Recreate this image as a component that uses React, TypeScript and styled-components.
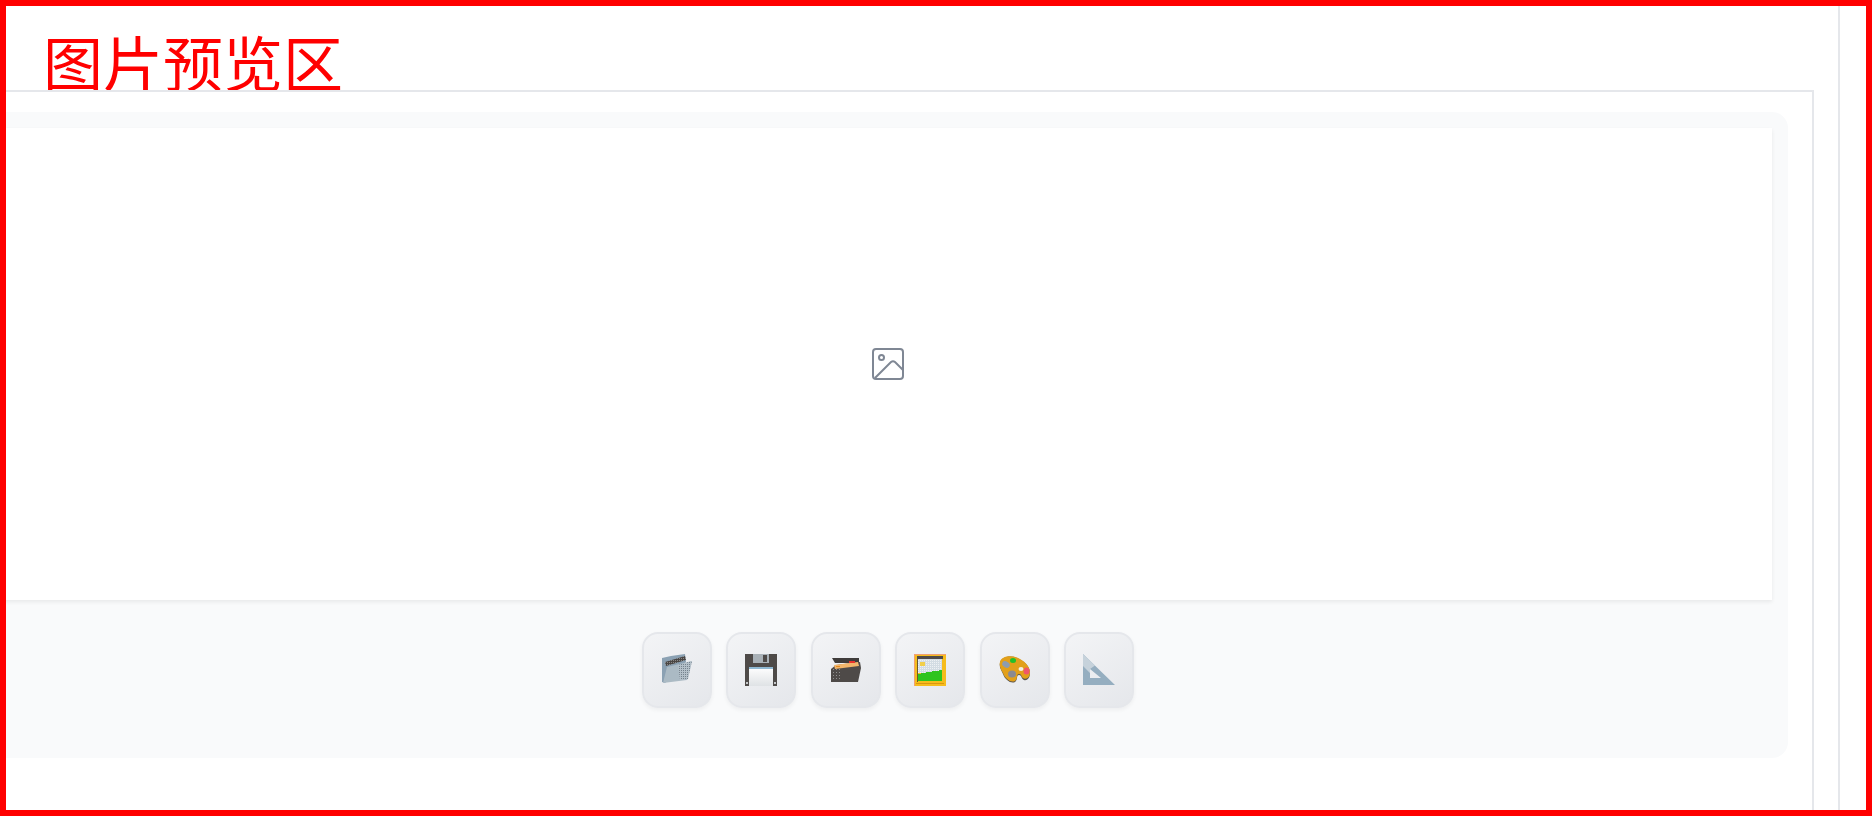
import React from "react";
import styled, { createGlobalStyle } from "styled-components";

const GlobalStyle = createGlobalStyle`
  html, body {
    margin: 0;
    padding: 0;
    background: #fff;
  }
`;

const Frame = styled.div`
  box-sizing: border-box;
  width: 1872px;
  height: 816px;
  border: 6px solid #ff0000;
  display: flex;
  overflow: hidden;
  background: #fff;
`;

const Workspace = styled.main`
  width: 1832px;
  flex-shrink: 0;
  display: flex;
  flex-direction: column;
  min-width: 0;
`;

const SideRail = styled.aside`
  flex: 1;
  border-left: 2px solid #e5e7eb;
`;

const TitleBar = styled.div`
  height: 84px;
  flex-shrink: 0;
  padding-left: 37px;
  overflow: hidden;
`;

const Title = styled.h1`
  margin: 0;
  font-family: "Noto Sans CJK SC", sans-serif;
  font-weight: 400;
  font-size: 60px;
  line-height: 110px;
  color: #ff0000;
  white-space: nowrap;
`;

const PreviewFrame = styled.section`
  flex: 1;
  margin-right: 24px;
  padding: 20px 24px 0 0;
  border-top: 2px solid #e5e7eb;
  border-right: 2px solid #e5e7eb;
`;

const Panel = styled.div`
  margin-left: -18px;
  height: 646px;
  box-sizing: border-box;
  padding: 16px 16px 0;
  background: #f9fafb;
  border-radius: 16px;
  display: flex;
  flex-direction: column;
`;

const Canvas = styled.div`
  height: 472px;
  flex-shrink: 0;
  background: #fff;
  box-shadow: 0 2px 4px rgba(0, 0, 0, 0.07);
  display: flex;
  align-items: center;
  justify-content: center;
`;

const Toolbar = styled.div`
  display: flex;
  justify-content: center;
  gap: 14.5px;
  padding-top: 32px;
`;

const ToolButton = styled.button`
  box-sizing: border-box;
  width: 70px;
  height: 76px;
  padding: 0;
  border: 2px solid #e5e7eb;
  border-radius: 16px;
  background: linear-gradient(145deg, #f3f4f6, #e5e7eb);
  box-shadow: 0 2px 4px rgba(0, 0, 0, 0.05);
  display: flex;
  align-items: center;
  justify-content: center;
`;

const Placeholder = () => (
  <svg width="32" height="32" viewBox="0 0 32 32" fill="none" stroke="#7f8794" strokeWidth="2">
    <rect x="1" y="1" width="30" height="30" rx="3" />
    <circle cx="9.5" cy="9.5" r="2.5" />
    <path d="M3 30 L19 14 Q21 12.5 23 14 L31 22" />
  </svg>
);

const OpenIcon = () => (
  <svg width="32" height="32" viewBox="0 0 32 32">
    <defs>
      <pattern id="folderDots" width="2" height="2" patternUnits="userSpaceOnUse">
        <rect width="2" height="2" fill="#b4c0c9" />
        <rect width="1" height="1" fill="#75828d" />
      </pattern>
      <pattern id="folderBand" width="2" height="2" patternUnits="userSpaceOnUse">
        <rect width="2" height="2" fill="#4a4644" />
        <rect width="1" height="1" fill="#8a8785" />
      </pattern>
    </defs>
    <path d="M1 4 L10 2 L24 0 L25 8 L4 29 L1 28 Z" fill="#8ba1b3" />
    <path d="M4 8 L24 2 L25 6 L5 12 Z" fill="url(#folderBand)" />
    <path d="M6 13 L31 7 L26 26 L2 29 Z" fill="#abbac4" />
    <path d="M17 11 L31 7 L27 25 L19 26 Z" fill="url(#folderDots)" />
  </svg>
);

const SaveIcon = () => (
  <svg width="32" height="32" viewBox="0 0 32 32" shapeRendering="crispEdges">
    <defs>
      <linearGradient id="saveLabel" x1="0" y1="0" x2="0" y2="1">
        <stop offset="0" stopColor="#ffffff" />
        <stop offset="1" stopColor="#dfe2e5" />
      </linearGradient>
    </defs>
    <rect x="0" y="0" width="32" height="32" fill="#4e4a48" />
    <rect x="8" y="0" width="16" height="9" fill="#a9b1b7" />
    <rect x="18" y="1" width="4" height="7" fill="#4e4a48" />
    <rect x="4" y="13" width="24" height="19" fill="url(#saveLabel)" />
    <rect x="4" y="13" width="24" height="2" fill="#8fb8d2" />
    <rect x="1" y="28" width="2" height="2" fill="#c5c8ca" />
    <rect x="29" y="28" width="2" height="2" fill="#c5c8ca" />
  </svg>
);

const ScanIcon = () => (
  <svg width="32" height="32" viewBox="0 0 32 32">
    <defs>
      <pattern id="scanDots" width="3" height="3" patternUnits="userSpaceOnUse">
        <rect width="3" height="3" fill="#4e4a48" />
        <rect width="1" height="1" fill="#8f8f8f" />
      </pattern>
    </defs>
    <path d="M2 4 L29 4 L29 9 L5 9 Z" fill="#3f3c3b" />
    <path d="M1 15 L6 11 L30 8 L31 14 L28 28 L1 28 Z" fill="#4e4a48" />
    <rect x="1" y="15" width="10" height="12" fill="url(#scanDots)" />
    <path d="M4 11 L28 8 L29 12 L5 15 Z" fill="#f2b56b" />
    <rect x="19" y="7" width="6" height="2" fill="#e8322c" />
    <rect x="6" y="12" width="4" height="1" fill="#e58a1f" />
  </svg>
);

const PictureIcon = () => (
  <svg width="32" height="32" viewBox="0 0 32 32" shapeRendering="crispEdges">
    <defs>
      <pattern id="skyDots" width="2" height="2" patternUnits="userSpaceOnUse">
        <rect width="2" height="2" fill="#d3dce3" />
        <rect width="1" height="1" fill="#eef1f4" />
      </pattern>
    </defs>
    <rect x="0" y="0" width="32" height="32" fill="#f6bc1c" />
    <rect x="0" y="0" width="32" height="1" fill="#f0a070" />
    <rect x="0" y="0" width="1" height="32" fill="#f0a070" />
    <rect x="3" y="2" width="26" height="3" fill="#4e4a48" />
    <rect x="4" y="5" width="24" height="14" fill="url(#skyDots)" />
    <rect x="6" y="8" width="5" height="4" fill="#f2cf4a" />
    <path d="M4 20 L14 18 L28 16 L28 27 L4 27 Z" fill="#2fc41e" />
    <rect x="3" y="5" width="1" height="23" fill="#6b5a2a" />
    <rect x="2" y="29" width="28" height="1" fill="#d9960f" />
  </svg>
);

const PaletteIcon = () => (
  <svg width="32" height="28" viewBox="0 0 32 28">
    <path d="M1 7 C2 1 11 -1 18 2 C25 5 31 10 31 17 C31 22 28 25 25 24 C22 23 23 19 20 19 C17 19 19 24 16 26 C12 28 6 24 4 18 C2 14 0 11 1 7 Z" fill="#5a554f" />
    <path d="M1 6 C2 0.5 11 -1 18 1.5 C25 4.5 31 10 31 16.5 C31 21 28 23.5 25 22.5 C22 21.5 23 18 20 18 C17 18 19 23 16 25 C12 27 6 23 4 17 C2 13.5 0 10 1 6 Z" fill="#e2a01a" />
    <ellipse cx="14" cy="4.5" rx="3" ry="2.5" fill="#22c02a" />
    <ellipse cx="7" cy="8.5" rx="4" ry="3" fill="#8c9cb0" transform="rotate(30 7 8.5)" />
    <ellipse cx="13" cy="18" rx="4" ry="3.5" fill="#8a8a92" />
    <ellipse cx="27.5" cy="15" rx="3" ry="3.5" fill="#f0566a" />
    <ellipse cx="22" cy="13" rx="2.5" ry="2" fill="#f4efe2" />
  </svg>
);

const SquareIcon = () => (
  <svg width="32" height="32" viewBox="0 0 32 32">
    <path fillRule="evenodd" d="M0 0 L32 31 L0 31 Z M7 15 L7 24 L18 24 Z" fill="#95aec0" />
    <path d="M0 0 L12 11.6 L7 15 L7 19 L0 12 Z" fill="#c6d2db" />
  </svg>
);

const tools = [
  { name: "open", icon: <OpenIcon /> },
  { name: "save", icon: <SaveIcon /> },
  { name: "scan", icon: <ScanIcon /> },
  { name: "picture", icon: <PictureIcon /> },
  { name: "palette", icon: <PaletteIcon /> },
  { name: "square", icon: <SquareIcon /> }
];

const App = () => {
  return (
    <>
      <GlobalStyle />
      <Frame>
        <Workspace>
          <TitleBar>
            <Title>图片预览区</Title>
          </TitleBar>
          <PreviewFrame>
            <Panel>
              <Canvas>
                <Placeholder />
              </Canvas>
              <Toolbar>
                {tools.map(tool => (
                  <ToolButton key={tool.name} type="button" aria-label={tool.name}>
                    {tool.icon}
                  </ToolButton>
                ))}
              </Toolbar>
            </Panel>
          </PreviewFrame>
        </Workspace>
        <SideRail />
      </Frame>
    </>
  );
};

export default App;
